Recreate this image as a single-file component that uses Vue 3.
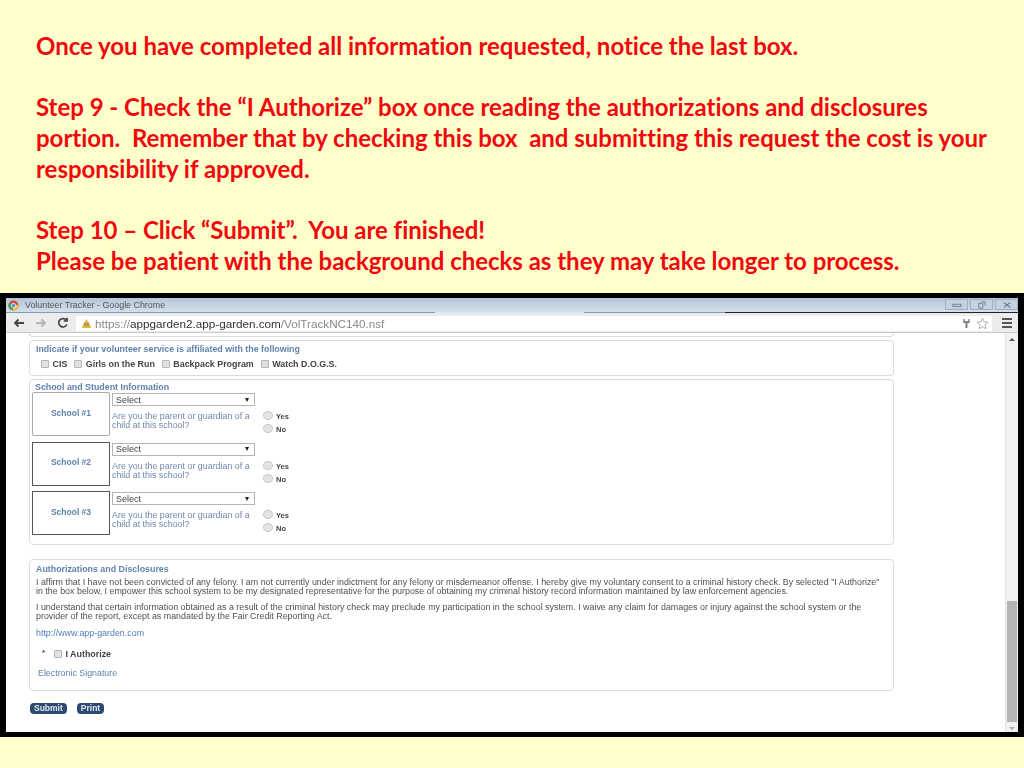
<script setup>
const affiliations = ['CIS', 'Girls on the Run', 'Backpack Program', 'Watch D.O.G.S.']
const schools = [
  { name: 'School #1', soft: true },
  { name: 'School #2', soft: false },
  { name: 'School #3', soft: false },
]
</script>

<template>
  <div class="page">
    <div class="notes">
      <p>Once you have completed all information requested, notice the last box.</p>
      <p class="gap">Step 9 - Check the “I Authorize” box once reading the authorizations and disclosures<br />portion.&nbsp; Remember that by checking this box&nbsp; and submitting this request the cost is your<br />responsibility if approved.</p>
      <p class="gap">Step 10 – Click “Submit”.&nbsp; You are finished!</p>
      <p>Please be patient with the background checks as they may take longer to process.</p>
    </div>

    <div class="shot">
      <div class="titlebar">
        <svg class="chrome-logo" viewBox="0 0 12 12" width="11" height="11">
          <circle cx="6" cy="6" r="5.500" fill="#d8473a" />
          <path d="M6 6 L1.200 3.200 A5.500 5.500 0 0 0 5 11.400 Z" fill="#4a9d52" />
          <path d="M6 6 L11.400 5 A5.500 5.500 0 0 1 5 11.400 Z" fill="#e9c545" />
          <circle cx="6" cy="6" r="2.400" fill="#5a8fd8" stroke="#fff" stroke-width="0.800" />
        </svg>
        <span class="title">Volunteer Tracker - Google Chrome</span>
        <div class="winbtns">
          <span class="winbtn"><svg viewBox="0 0 20 10"><rect x="5" y="4" width="10" height="3" fill="none" stroke="#66727f" /></svg></span>
          <span class="winbtn"><svg viewBox="0 0 20 10"><path d="M6 3h5v6H6zM9 1h5v5" fill="none" stroke="#66727f" /></svg></span>
          <span class="winbtn"><svg viewBox="0 0 20 10"><path d="M6 2l8 6M14 2l-8 6" fill="none" stroke="#66727f" stroke-width="1.400" /></svg></span>
        </div>
      </div>
      <div class="tabline"><span class="tl-a"></span><span class="tl-b"></span><span class="tl-c"></span><span class="tl-d"></span></div>
      <div class="toolbar">
        <svg class="nav" viewBox="0 0 12 10" width="12" height="10"><path d="M11 5H2M5.500 1.500 2 5l3.500 3.500" fill="none" stroke="#444" stroke-width="1.800" /></svg>
        <svg class="nav" viewBox="0 0 12 10" width="12" height="10"><path d="M1 5h9M6.500 1.500 10 5 6.500 8.500" fill="none" stroke="#b5b5b5" stroke-width="1.800" /></svg>
        <svg class="nav" viewBox="0 0 12 12" width="12" height="12"><path d="M9.800 7.500A4.200 4.200 0 1 1 9.300 3.200M10 .8v3.200H6.800" fill="none" stroke="#444" stroke-width="1.700" /></svg>
        <div class="omni">
          <svg viewBox="0 0 12 12" width="11" height="11"><path d="M6 1 11.500 11H.5Z" fill="#eebb33" /><rect x="3" y="5" width="6" height="4" fill="#b89a55" /></svg>
          <span class="url"><span class="dim">https://</span>appgarden2.app-garden.com<span class="dim">/VolTrackNC140.nsf</span></span>
          <span class="spring"></span>
          <svg viewBox="0 0 10 12" width="9" height="11"><path d="M1.500 1v4.500h2.500V11h2V5.500h2.500V1H7v2.500H3V1Z" fill="#777" /></svg>
          <svg class="star-icon" viewBox="0 0 14 14" width="13" height="13"><path d="M7 1.200 8.700 5.200l4.300.4-3.300 2.800 1 4.200L7 10.400 3.300 12.600l1-4.200L1 5.600l4.300-.4Z" fill="#fff" stroke="#9a9a9a" stroke-width="0.800" /></svg>
        </div>
        <div class="menu"><i></i><i></i><i></i></div>
      </div>

      <div class="viewport">
        <div class="content">
          <div class="card stub"></div>

          <section class="card affil">
            <h4>Indicate if your volunteer service is affiliated with the following</h4>
            <div class="checks">
              <label v-for="a in affiliations" :key="a" class="check"><span class="box"></span>{{ a }}</label>
            </div>
          </section>

          <section class="card schools">
            <h4>School and Student Information</h4>
            <div v-for="s in schools" :key="s.name" class="school">
              <div class="sname" :class="{ soft: s.soft }">{{ s.name }}</div>
              <div class="squest">
                <div class="select"><span>Select</span><span class="arrow"></span></div>
                <div class="q">Are you the parent or guardian of a<br />child at this school?</div>
              </div>
              <div class="radios">
                <div class="radio"><span class="dot"></span>Yes</div>
                <div class="radio"><span class="dot"></span>No</div>
              </div>
            </div>
          </section>

          <section class="card auth">
            <h4>Authorizations and Disclosures</h4>
            <p>I affirm that I have not been convicted of any felony. I am not currently under indictment for any felony or misdemeanor offense. I hereby give my voluntary consent to a criminal history check. By selected "I Authorize"<br />in the box below, I empower this school system to be my designated representative for the purpose of obtaining my criminal history record information maintained by law enforcement agencies.</p>
            <p class="p2">I understand that certain information obtained as a result of the criminal history check may preclude my participation in the school system. I waive any claim for damages or injury against the school system or the<br />provider of the report, except as mandated by the Fair Credit Reporting Act.</p>
            <div class="link">http://www.app-garden.com</div>
            <div class="authorize"><span class="star">*</span><span class="box"></span>I Authorize</div>
            <div class="esig">Electronic Signature</div>
          </section>

          <div class="buttons">
            <span class="btn">Submit</span>
            <span class="btn">Print</span>
          </div>
        </div>
        <div class="scrollbar">
          <span class="up"></span>
          <span class="spacer"></span>
          <span class="thumb"></span>
          <span class="down"></span>
        </div>
      </div>
    </div>
  </div>
</template>

<style>
html, body { margin: 0; background: #ffffcc; }
</style>

<style scoped>
.page {
  width: 1024px;
  height: 768px;
  background: #ffffcc;
  overflow: hidden;
  display: flex;
  flex-direction: column;
}
.notes {
  height: 262px;
  flex: none;
  box-sizing: border-box;
  padding: 31px 0 0 36px;
  margin-bottom: 31px;
  font-family: Lato, "Open Sans", sans-serif;
  font-weight: 700;
  font-size: 24px;
  line-height: 30.700px;
  letter-spacing: -0.02px;
  font-variant-ligatures: none;
  color: #f0080f;
  white-space: nowrap;
}
.notes p { margin: 0; }
.notes .gap { margin-top: 30.700px; }
.shot {
  height: 444px;
  flex: none;
  background: #000;
  padding: 5px 6px 5px 6px;
  box-sizing: border-box;
  display: flex;
  flex-direction: column;
  font-family: "Liberation Sans", Arial, sans-serif;
  filter: blur(0.35px);
}
.titlebar {
  height: 14px;
  flex: none;
  background: linear-gradient(#b4c6dc, #d4dfea);
  display: flex;
  align-items: center;
  padding-left: 2px;
  font-size: 8.900px;
  color: #555;
}
.chrome-logo { margin-right: 6px; }
.winbtns { margin-left: auto; display: flex; gap: 2px; align-self: flex-start; margin-top: 1px; }
.winbtn {
  width: 21px;
  height: 9px;
  border: 1px solid #9fb0c2;
  background: #c3d1e0;
  display: flex;
  align-items: center;
  justify-content: center;
}
.winbtn svg { width: 16px; height: 8px; }
.tabline { height: 2px; flex: none; display: flex; background: #e4ebf2; }
.tabline span { height: 1px; }
.tl-a { width: 429px; background: #8c98a6; }
.tl-b { width: 149px; background: #dfe8f0; }
.tl-c { width: 141px; background: #8c98a6; }
.tl-d { flex: 1; background: #222; }
.toolbar {
  height: 18px;
  flex: none;
  background: #ececec;
  display: flex;
  align-items: center;
  padding-left: 7px;
  border-bottom: 1px solid #c9c9c9;
}
.nav { margin-right: 10px; flex: none; }
.omni {
  width: 916px;
  height: 15px;
  margin-left: -3px;
  flex: none;
  background: #fff;
  display: flex;
  align-items: center;
  gap: 3px;
  padding: 0 3px 0 5px;
  box-sizing: border-box;
  font-size: 11.700px;
  color: #333;
}
.omni .dim { color: #8a8a8a; }
.spring { flex: 1; }
.star-icon { margin-left: 2px; }
.menu {
  margin-left: 10px;
  width: 10px;
  display: flex;
  flex-direction: column;
  gap: 2px;
}
.menu i { height: 2px; background: #555; display: block; }
.viewport {
  flex: 1;
  min-height: 0;
  background: #fff;
  display: flex;
  overflow: hidden;
}
.content { flex: 1; min-width: 0; padding: 0 0 0 23px; }
.card {
  width: 865px;
  box-sizing: border-box;
  border: 1px solid #dcdcdc;
  border-radius: 4px;
}
.stub { height: 4px; border-top: 0; border-top-left-radius: 0; border-top-right-radius: 0; }
h4 {
  margin: 0;
  font-size: 8.850px;
  line-height: 10px;
  font-weight: 700;
  color: #5f82ad;
}
.affil { height: 36px; margin-top: 3px; padding: 3px 6px 0; }
.checks { display: flex; margin-top: 5px; padding-left: 5px; gap: 7px; }
.check, .authorize {
  display: flex;
  align-items: center;
  font-size: 8.900px;
  font-weight: 700;
  color: #444;
  line-height: 10px;
}
.box {
  width: 8px;
  height: 8px;
  margin-right: 3.500px;
  border: 1px solid #b5b5b5;
  border-radius: 1px;
  background: #e2e2e2;
  box-sizing: border-box;
}
.schools { height: 166px; margin-top: 3px; padding: 2px 2px 0 2px; }
.schools h4 { padding-left: 3px; }
.school { display: flex; height: 49.700px; }
.sname {
  width: 78px;
  height: 44px;
  flex: none;
  box-sizing: border-box;
  border: 1px solid #555;
  display: flex;
  align-items: center;
  justify-content: center;
  padding-bottom: 3px;
  font-size: 8.500px;
  font-weight: 700;
  color: #5f82ad;
}
.sname.soft { border-color: #aaa; border-radius: 2px; }
.squest { width: 143px; margin-left: 2px; margin-top: 1px; flex: none; }
.select {
  height: 11px;
  border: 1px solid #b5b5b5;
  display: flex;
  justify-content: space-between;
  align-items: center;
  padding: 0 5px 0 3px;
  font-size: 9px;
  color: #444;
}
.arrow {
  width: 0;
  height: 0;
  border-left: 2px solid transparent;
  border-right: 2px solid transparent;
  border-top: 4px solid #222;
}
.q {
  margin-top: 6px;
  font-size: 8.900px;
  line-height: 9px;
  color: #7089ae;
  white-space: nowrap;
}
.radios { margin-left: 8px; padding-top: 18px; }
.radio {
  display: flex;
  align-items: center;
  height: 13px;
  font-size: 7.500px;
  font-weight: 700;
  color: #444;
}
.dot {
  width: 10px;
  height: 9px;
  margin-right: 3px;
  margin-top: -2px;
  border: 1px solid #c8c8c8;
  border-radius: 50%;
  box-sizing: border-box;
  background: #e4e4e4;
}
.auth { height: 132px; margin-top: 14px; padding: 4px 6px 0; }
.auth p {
  margin: 0;
  font-size: 8.880px;
  line-height: 8.500px;
  color: #505050;
  white-space: nowrap;
}
.auth h4 { margin-bottom: 4px; }
.auth .p2 { margin-top: 8px; }
.link { margin-top: 8px; font-size: 8.900px; line-height: 10px; color: #4f7db8; }
.authorize { margin-top: 11px; padding-left: 6px; }
.star { width: 12px; font-size: 8px; margin-top: -3px; }
.esig { margin-top: 9px; padding-left: 2px; font-size: 8.850px; line-height: 10px; color: #5f82ad; }
.buttons { display: flex; gap: 10px; margin-top: 12px; margin-left: 1px; }
.btn {
  height: 11px;
  padding: 0 4px;
  border-radius: 4px;
  background: #2d4a73;
  color: #e4e9f0;
  font-size: 8.500px;
  font-weight: 700;
  line-height: 10px;
}
.scrollbar {
  width: 13px;
  flex: none;
  background: #f1f1f1;
  display: flex;
  flex-direction: column;
  align-items: center;
  border-left: 1px solid #e4e4e4;
  box-sizing: border-box;
}
.up {
  margin-top: 5px;
  width: 0;
  height: 0;
  border-left: 3px solid transparent;
  border-right: 3px solid transparent;
  border-bottom: 3px solid #555;
}
.spacer { flex: 1; }
.thumb { width: 10px; height: 121px; background: #b5b5b5; }
.down {
  margin: 5px 0 2px;
  width: 0;
  height: 0;
  border-left: 3px solid transparent;
  border-right: 3px solid transparent;
  border-top: 3px solid #aaa;
}
</style>
